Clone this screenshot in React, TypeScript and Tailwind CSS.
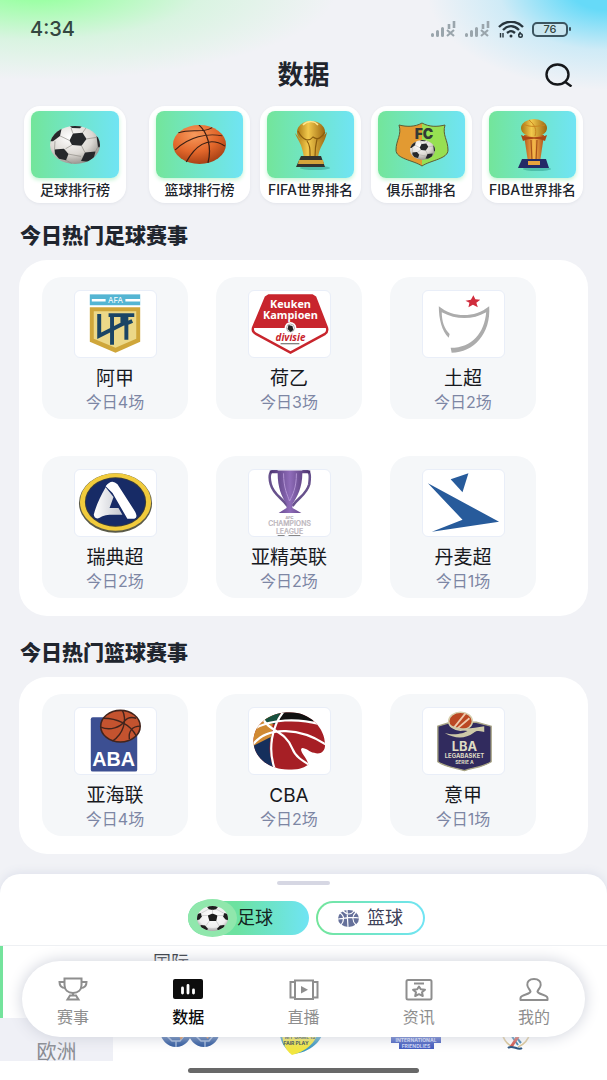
import React from 'react';

const SoccerBall = ({ className = '' }: { className?: string }) => (
  <svg viewBox="0 0 100 100" preserveAspectRatio="none" className={className} aria-hidden="true">
    <defs>
      <radialGradient id="soccerShade" cx="40%" cy="30%" r="75%">
        <stop offset="0%" stopColor="#ffffff" />
        <stop offset="60%" stopColor="#dcd8d3" />
        <stop offset="100%" stopColor="#8e8a85" />
      </radialGradient>
      <clipPath id="soccerClip">
        <circle cx="50" cy="50" r="50" />
      </clipPath>
    </defs>
    <circle cx="50" cy="50" r="50" fill="url(#soccerShade)" />
    <g clipPath="url(#soccerClip)">
      <g fill="#26282b">
        <path d="M46 20 L65 18 L73 34 L63 52 L44 50 L39 38Z" />
        <path d="M-2 40 L2 18 L14 4 L24 2 L20 26 L6 40Z" />
        <path d="M9 62 L28 60 L37 74 L32 90 L18 86 L10 74Z" />
        <path d="M70 70 L91 67 L88 82 L76 94 L62 92Z" />
        <path d="M93 26 L102 34 L102 56 L96 56Z" />
        <path d="M38 -2 L66 -2 L60 6 L44 5Z" />
      </g>
      <path
        d="M46 20 L42 5 M20 26 L39 38 M44 50 L31 60 M63 52 L70 70 M73 34 L93 30 M65 18 L72 5 M10 40 L9 62 M37 74 L62 80 M91 67 L96 54 M32 90 L44 99"
        stroke="#8c8984"
        strokeWidth="1.5"
        fill="none"
      />
    </g>
  </svg>
);

const FrontBall = ({ className = '' }: { className?: string }) => (
  <svg viewBox="0 0 100 100" preserveAspectRatio="none" className={className} aria-hidden="true">
    <defs>
      <radialGradient id="frontShade" cx="50%" cy="40%" r="60%">
        <stop offset="0%" stopColor="#ffffff" />
        <stop offset="75%" stopColor="#eeeeee" />
        <stop offset="100%" stopColor="#a8a8a8" />
      </radialGradient>
      <clipPath id="frontClip">
        <circle cx="50" cy="50" r="50" />
      </clipPath>
    </defs>
    <circle cx="50" cy="50" r="50" fill="url(#frontShade)" />
    <g clipPath="url(#frontClip)" fill="#1d1d1d">
      <path d="M35 38 L50 30 L66 38 L62 60 L40 60Z" />
      <path d="M32 3 L50 -4 L68 3 L62 13 L50 16 L38 13Z" />
      <path d="M-2 58 L0 32 L12 28 L16 42 L8 54Z" />
      <path d="M102 58 L100 32 L88 28 L84 42 L92 54Z" />
      <path d="M12 76 L26 78 L36 92 L26 102 L10 88Z" />
      <path d="M88 76 L74 78 L64 92 L74 102 L90 88Z" />
      <path
        d="M50 30V14 M35 38L14 38 M66 38L86 38 M40 60L28 80 M62 60L72 80 M38 12L12 30 M62 12L88 30 M36 92H64"
        stroke="#b9b9b9"
        strokeWidth="2"
        fill="none"
      />
    </g>
  </svg>
);

const Basketball = ({ className = '' }: { className?: string }) => (
  <svg viewBox="0 0 100 100" preserveAspectRatio="none" className={className} aria-hidden="true">
    <defs>
      <radialGradient id="basketShade" cx="40%" cy="25%" r="80%">
        <stop offset="0%" stopColor="#f79a5c" />
        <stop offset="55%" stopColor="#e2672b" />
        <stop offset="100%" stopColor="#a03c12" />
      </radialGradient>
    </defs>
    <circle cx="50" cy="50" r="50" fill="url(#basketShade)" />
    <path
      d="M49 0 C64 18 74 55 66 97 M4 64 C30 30 65 20 93 28 M10 20 C35 8 55 22 74 7 M25 95 C40 58 65 25 98 54"
      stroke="#3b1f14"
      strokeWidth="2.4"
      fill="none"
    />
  </svg>
);

const GoldDefs = () => (
  <defs>
    <linearGradient id="gold" x1="0" x2="1">
      <stop offset="0" stopColor="#a87512" />
      <stop offset="0.4" stopColor="#f2c94c" />
      <stop offset="1" stopColor="#9a6510" />
    </linearGradient>
    <linearGradient id="amber" x1="0" x2="1">
      <stop offset="0" stopColor="#b5561b" />
      <stop offset="0.5" stopColor="#f5b94a" />
      <stop offset="1" stopColor="#b0501a" />
    </linearGradient>
  </defs>
);

const WorldCup = () => (
  <svg viewBox="0 0 40 52" className="h-[52px] w-10" aria-hidden="true">
    <GoldDefs />
    <ellipse cx="24" cy="49" rx="15" ry="2" fill="#2c9a8a" opacity="0.5" />
    <path d="M4 14 C7 22 11 24 13 39 H27 C28 28 34 24 36 13 L30 20 H9Z" fill="url(#gold)" />
    <ellipse cx="20" cy="13" rx="14" ry="11" fill="url(#gold)" />
    <path d="M7 12 C12 22 18 23 22 18 C27 22 31 18 34 13 M16 22 C20 27 19 33 19 39 M26 20 C24 28 24 32 24 38" stroke="#8a5c0e" strokeWidth="1.2" fill="none" />
    <path d="M12 6 C17 1 24 2 27 6" stroke="#ffe58e" strokeWidth="1.5" fill="none" />
    <path d="M10 37 H30 L34 48 H5Z" fill="#33332f" />
    <path d="M8 41 H32 L33 45 H7Z" fill="#d3a43a" />
  </svg>
);

const FibaCup = () => (
  <svg viewBox="0 0 40 52" className="h-[52px] w-10" aria-hidden="true">
    <ellipse cx="24" cy="50" rx="14" ry="2" fill="#2c9a8a" opacity="0.5" />
    <path d="M11 16 H31 L27 43 H15Z" fill="url(#amber)" />
    <ellipse cx="21" cy="9" rx="13" ry="9" fill="url(#gold)" />
    <path d="M10 5 C18 9 26 7 32 6 M16 1 C22 6 24 11 22 17" stroke="#c98520" strokeWidth="1" fill="none" />
    <path d="M8 16 C14 19 28 19 34 16 L32 22 C26 19 16 19 10 22Z" fill="#a94716" />
    <path d="M18 21 L19 42 M24 21 L23 42" stroke="#a9521a" strokeWidth="1.2" />
    <path d="M9 40 H33 L36 49 H5Z" fill="#232a66" />
    <path d="M15 42 H27 V46 H15Z" fill="#e8a33c" />
  </svg>
);

const ClubBadge = () => (
  <div className="relative h-[45px] w-[54px]">
    <svg viewBox="0 0 54 45" className="h-full w-full" aria-hidden="true">
      <path
        d="M4 3 C12 5 20 5 27 1 C34 5 42 5 50 3 C47 13 53 18 53 28 C53 37 36 38 27 44 C18 38 1 37 1 28 C1 18 7 13 4 3Z"
        fill="#e29a32"
      />
      <path d="M27 1 C34 5 42 5 50 3 C47 13 53 18 53 28 C53 37 36 38 27 44Z" fill="#97e052" />
      <path
        d="M4 3 C12 5 20 5 27 1 C34 5 42 5 50 3 C47 13 53 18 53 28 C53 37 36 38 27 44 C18 38 1 37 1 28 C1 18 7 13 4 3Z"
        fill="none"
        stroke="#5b5d38"
        strokeWidth="1"
      />
      <text x="29" y="17" textAnchor="middle" fontSize="14" fontWeight="900" fill="#333a36" fontFamily="Inter, sans-serif">
        FC
      </text>
    </svg>
    <SoccerBall className="absolute top-[18px] left-[15px] h-5 w-[25px]" />
  </div>
);

const LogoLpf = () => (
  <>
    <rect x="15" y="3" width="51" height="11" fill="#54b5d3" />
    <path d="M17 9 H31 M51 9 H66" stroke="#fff" strokeWidth="2.4" />
    <text x="41" y="12" textAnchor="middle" fontSize="8" fill="#fff" fontFamily="Inter, sans-serif">AFA</text>
    <path d="M15 16 H66 V51 L41 62 L15 51Z" fill="#cfa63a" />
    <path d="M19 20 H62 V48 L41 57 L19 48Z" fill="#ecd888" />
    <path d="M24.500 23 V45 L48 33 V24 H34 M37.500 54 V24 M52 49 V24 H60 M51 33 L58 30" stroke="#1b4565" strokeWidth="4" fill="none" />
  </>
);

const LogoKeuken = () => (
  <>
    <path d="M20 4 H64 L67 6 L79 37 Q80 41 77 43 L42 62 L7 43 Q3 41 4 37 L17 6Z" fill="#fff" stroke="#c8252d" strokeWidth="2.4" />
    <path d="M20 4 H64 L67 6 L79 37 H4 L17 6Z" fill="#c8252d" />
    <g textAnchor="middle" fontFamily="Open Sans, sans-serif" fontWeight="700">
      <text x="42" y="17" fontSize="11" fill="#fff">Keuken</text>
      <text x="42" y="28" fontSize="11" fill="#fff">Kampioen</text>
      <text x="42" y="50" fontSize="10" fontStyle="italic" fill="#c8252d">divisie</text>
    </g>
    <circle cx="42" cy="37" r="6" fill="#fff" />
    <circle cx="42" cy="37" r="4" fill="#fff" stroke="#999" strokeWidth="0.8" />
    <path d="M40 34 L44 35 L45 39 L42 41 L39 38Z" fill="#222" />
    <path d="M32 53 H51" stroke="#555" strokeWidth="1" />
  </>
);

const LogoTurkey = () => (
  <>
    <path d="M51 4 L53 8 L58 8.500 L54 11.500 L55.500 16 L50.500 13.500 L46 16 L47 11.500 L43 9.500 L48.500 8.500Z" fill="#d02c3c" />
    <path
      d="M16 15 C31 27 52 27 67 15 C69 43 51 62 29 62 L28 57 C50 57 62 42 64 21 C50 29 34 29 19 21 C19 31 22 38 27 43 L26 47 C19 40 16 28 16 15Z"
      fill="#acacac"
    />
  </>
);

const LogoSweden = () => (
  <>
    <defs>
      <linearGradient id="swedenFold" x1="0" x2="1">
        <stop offset="0" stopColor="#fff" />
        <stop offset="1" stopColor="#c4c7cf" />
      </linearGradient>
    </defs>
    <ellipse cx="41" cy="33" rx="37" ry="30" fill="#5a5a48" />
    <ellipse cx="41" cy="32" rx="36" ry="29" fill="#f1cb3c" />
    <ellipse cx="41" cy="32" rx="31" ry="25" fill="#3b3d3c" />
    <ellipse cx="41" cy="32" rx="30" ry="24" fill="#172b66" />
    <path d="M31 17 C26 26 21 36 19 45 Q20 50 25 48 C30 44 39 45 48 45 L44 38 L35 38 L39 27Z" fill="url(#swedenFold)" />
    <path d="M31 16 Q37 8 43 14 L61 42 Q64 48 60 49 H53 L38 23Z" fill="#fff" />
  </>
);

const LogoAfc = () => (
  <>
    <defs>
      <linearGradient id="afcCup" x1="0" x2="1">
        <stop offset="0" stopColor="#4b3370" />
        <stop offset="0.5" stopColor="#8f6cb9" />
        <stop offset="1" stopColor="#49306b" />
      </linearGradient>
    </defs>
    <path d="M29 0 C20 -1 20 6 22 14 C25 25 33 27 39 36 M54 0 C63 -1 62 6 61 14 C58 25 50 27 44 36" stroke="#67518c" strokeWidth="2.600" fill="none" />
    <path d="M21 0 H62 V3 H54 C54 17 49 27 44 34 V38 L53 43 H30 L38 38 V34 C33 27 29 17 29 3 H21Z" fill="url(#afcCup)" />
    <path d="M35 3 C35 18 39 25 41 31 C44 25 48 18 48 3" stroke="#b294d3" strokeWidth="1" fill="none" />
    <g textAnchor="middle" fontFamily="Inter, sans-serif" fontWeight="500" fill="#cbc6cc" stroke="#9f979f" strokeWidth="0.200">
      <text x="41" y="49" fontSize="4">AFC</text>
      <text x="41" y="56" fontSize="7">CHAMPIONS</text>
      <text x="41" y="64" fontSize="7">LEAGUE</text>
    </g>
    <path d="M29 66 H36 M40 66 H52" stroke="#777" strokeWidth="1" />
  </>
);

const LogoDenmark = () => (
  <g fill="#275b9b">
    <path d="M28 9 L46 3 L40 22Z" />
    <path d="M5 13 L77 52 L9 62 L40 50Z" />
  </g>
);

const LogoAba = () => (
  <>
    <rect x="16" y="9" width="47" height="55" rx="2" fill="#3c4f92" />
    <text x="39" y="58" textAnchor="middle" fontSize="20" fontWeight="700" fill="#fff" fontFamily="Liberation Sans, sans-serif">
      ABA
    </text>
    <ellipse cx="46" cy="18" rx="20" ry="16" fill="#c4532f" stroke="#42241c" strokeWidth="1.600" />
    <path d="M48 2 C53 12 49 26 38 33 M26 19 C36 23 46 19 50 13 C54 8 59 9 62 10 M29 10 C42 10 56 16 62 28 M66 18 C58 18 54 23 55 31" stroke="#42241c" strokeWidth="1.400" fill="none" />
  </>
);

const LogoCba = () => (
  <>
    <defs>
      <clipPath id="cbaClip">
        <path d="M4.500 33 C4.500 17 20 4 41 4 C62 4 77 20 77 37 C77 44 72 47 66 45 C61 44 58 40 54 40 C49 42 60 51 60 57 C54 61 49 62 40 62 C20 62 4.500 49 4.500 33Z" />
      </clipPath>
    </defs>
    <g clipPath="url(#cbaClip)">
      <rect width="82" height="66" fill="#a61f25" />
      <path d="M0 0 H26 L22 32 L0 42Z" fill="#d08a33" />
      <path d="M0 40 L22 29 C19 43 22 56 28 66 H0Z" fill="#152f5c" />
      <path d="M16 0 H34 L27 16 L16 14Z" fill="#17503e" />
      <path d="M34 2 H70 L64 15 C52 10 40 12 28 14Z" fill="#111" />
      <path d="M36 2 C24 16 17 42 28 66 M3 22 C22 10 50 10 72 16 M3 38 C18 16 54 20 80 38 M14 10 C20 24 37 22 44 41 C47 49 54 53 64 59" stroke="#fff" strokeWidth="2.200" fill="none" />
    </g>
  </>
);

const LogoLba = () => (
  <>
    <path d="M15 18 L28 14 H54 L69 18 V54 C60 60 50 60 42 63 C33 60 24 60 15 54Z" fill="#312b5e" stroke="#a9a686" strokeWidth="1.400" />
    <ellipse cx="38" cy="13" rx="12" ry="9" fill="#bb4823" stroke="#d6cfae" strokeWidth="1.500" />
    <path d="M31 20 L43 5 M34 21 L47 10" stroke="#eec9ab" strokeWidth="1.800" />
    <path d="M22 25 C32 28 42 25 45 23 C35 21 29 21 28 17 C39 22 50 20 62 18 V24 C55 23 55 22 51 25 C43 31 32 31 22 25Z" fill="#cdc9a8" />
    <g textAnchor="middle" fontFamily="Inter, sans-serif" fontWeight="700" fill="#dfdcc4">
      <text x="42" y="43" fontSize="13">LBA</text>
      <text x="42" y="50" fontSize="6">LEGABASKET</text>
      <text x="42" y="56" fontSize="5">SERIE A</text>
    </g>
  </>
);

const shortcuts = [
  { label: '足球排行榜', art: <SoccerBall className="h-[38px] w-[50px]" /> },
  { label: '篮球排行榜', art: <Basketball className="h-[39px] w-[53px]" /> },
  { label: 'FIFA世界排名', art: <WorldCup /> },
  { label: '俱乐部排名', art: <ClubBadge /> },
  { label: 'FIBA世界排名', art: <FibaCup /> },
];

const footballLeagues = [
  { name: '阿甲', count: '今日4场', logo: <LogoLpf /> },
  { name: '荷乙', count: '今日3场', logo: <LogoKeuken /> },
  { name: '土超', count: '今日2场', logo: <LogoTurkey /> },
  { name: '瑞典超', count: '今日2场', logo: <LogoSweden /> },
  { name: '亚精英联', count: '今日2场', logo: <LogoAfc /> },
  { name: '丹麦超', count: '今日1场', logo: <LogoDenmark /> },
];

const basketballLeagues = [
  { name: '亚海联', count: '今日4场', logo: <LogoAba /> },
  { name: 'CBA', count: '今日2场', logo: <LogoCba /> },
  { name: '意甲', count: '今日1场', logo: <LogoLba /> },
];

const tabs = [
  {
    label: '赛事',
    icon: (
      <g fill="none" stroke="#8e8e8e" strokeWidth="2">
        <path d="M6.500 1.500 H23.500 V8 C23.500 13 20 16 15 16 C10 16 6.500 13 6.500 8Z" />
        <path d="M6.500 5 H1.500 C1.500 9 3 11 7.500 11 M23.500 5 H28.500 C28.500 9 27 11 22.500 11 M15 16 V19 M12 18.500 H18 L20.500 22.500 H9.500Z" />
      </g>
    ),
  },
  {
    label: '数据',
    active: true,
    icon: (
      <>
        <rect y="2" width="30" height="20" rx="2" fill="#0d0d0d" />
        <path d="M9.500 11 V16 M15 8.500 V16 M20.500 13 V16" stroke="#fff" strokeWidth="2.800" strokeLinecap="round" />
      </>
    ),
  },
  {
    label: '直播',
    icon: (
      <>
        <path d="M6 3.500 H24 V22 H6Z M6 5 H1.500 V20.500 H6 M24 5 H28.500 V20.500 H24" fill="none" stroke="#8e8e8e" strokeWidth="2" />
        <path d="M12 9 L19 12.800 L12 16.500Z" fill="#8e8e8e" />
      </>
    ),
  },
  {
    label: '资讯',
    icon: (
      <g fill="none" stroke="#8e8e8e" strokeWidth="2" strokeLinejoin="round">
        <rect x="2.500" y="3" width="25" height="19.500" rx="1.500" />
        <path d="M10 6.500 H20" />
        <path d="M15 9.500 L16.800 12.300 L21 12.800 L18 15.200 L18.800 19 L15 17.200 L11.200 19 L12 15.200 L9 12.800 L13.200 12.300Z" />
      </g>
    ),
  },
  {
    label: '我的',
    icon: (
      <path
        d="M15 2 C10.500 2 7.800 4.500 8.300 8 C8.600 11 11 12.500 11.500 14.500 C11 18 2 17 1.500 21 V23 H28.500 V21 C28 17 19 18 18.500 14.500 C19 12.500 21.400 11 21.700 8 C22.200 4.500 19.500 2 15 2Z"
        fill="none"
        stroke="#8e8e8e"
        strokeWidth="2"
        strokeLinejoin="round"
      />
    ),
  },
];

const Signal = () => (
  <svg viewBox="0 0 26 16" className="h-4 w-[26px]" fill="none" stroke="#9aa5ac" strokeWidth="3" aria-hidden="true">
    <path d="M2.500 13.500 V14.500 M7.500 10.500 V14.500 M12.500 7.500 V14.500" strokeLinecap="round" />
    <path d="M19 3 V8 M24 0 V7" strokeWidth="2.600" />
    <path d="M17 9 L24 15 M24 9 L17 15" strokeWidth="2.200" />
  </svg>
);

const StatusBar = () => (
  <div className="flex h-[58px] shrink-0 items-center justify-between pr-9 pl-[30px] text-[#34463f]">
    <span className="text-xl font-medium">4:34</span>
    <div className="flex items-center gap-2">
      <Signal />
      <Signal />
      <svg viewBox="0 0 26 17" className="h-[17px] w-[26px]" fill="none" stroke="#27353d" aria-hidden="true">
        <path d="M1 6 C8 -1 18 -1 25 6 M5 9 C10 4 16 4 21 9 M9 12 C12 9.500 14 9.500 17 12" strokeWidth="2.400" />
        <circle cx="13" cy="15" r="1.500" fill="#27353d" stroke="none" />
        <path d="M2.500 16.500 V12 M5 12 V16.500 M22.500 11 L20.500 14" strokeWidth="1.400" />
        <circle cx="22.500" cy="14.500" r="1.800" strokeWidth="1.400" />
      </svg>
      <span className="flex items-center">
        <span className="flex h-[15px] w-9 items-center justify-center rounded-[5px] border-2 border-[#3c5560] bg-[#c9e6f0] text-[11px] leading-none font-medium">
          76
        </span>
        <span className="ml-px h-1 w-0.5 rounded-full bg-[#3c5560]" />
      </span>
    </div>
  </div>
);

const ShortcutCard = ({ label, art }: { label: string; art: React.ReactNode }) => (
  <button className="flex h-[97px] flex-col rounded-2xl bg-white px-[7px] pt-[5px] shadow-[0_1px_3px_#e2e4ea]">
    <span className="flex h-[67px] w-full items-center justify-center rounded-lg bg-linear-to-r from-[#73e59a] to-[#70e4f4] shadow-[0_2px_4px_#c5f5d4]">
      {art}
    </span>
    <span className="w-full text-center text-[14px] leading-6 font-medium whitespace-nowrap text-[#20242c]">
      <span className="-mx-2 inline-block">{label}</span>
    </span>
  </button>
);

type League = { name: string; count: string; logo: React.ReactNode };

const LeaguePanel = ({ title, leagues }: { title: string; leagues: League[] }) => (
  <section>
    <h2 className="mb-3 pl-5 text-[21px] leading-6 font-black text-[#20252e]">{title}</h2>
    <div className="mx-[19px] grid grid-cols-3 gap-x-7 gap-y-[37px] rounded-[28px] bg-white pt-[17px] pr-[52px] pb-[18px] pl-[23px]">
      {leagues.map((league) => (
        <button key={league.name} className="flex h-[142px] flex-col items-center rounded-[20px] bg-[#f5f7f9] pt-[13px]">
          <span className="mb-[9px] block overflow-hidden rounded-md border border-[#e9eef8] bg-white">
            <svg viewBox="0 0 82 66" className="h-[66px] w-[81px]" aria-hidden="true">
              {league.logo}
            </svg>
          </span>
          <span className="text-[19px] leading-6 text-[#17191e]">{league.name}</span>
          <span className="text-base leading-[22px] text-[#7d86a4]">{league.count}</span>
        </button>
      ))}
    </div>
  </section>
);

const LeagueSheet = () => (
  <section className="mt-5 flex min-h-0 flex-1 flex-col overflow-hidden rounded-t-[20px] bg-white shadow-[0_-2px_10px_#dfe2ec]">
    <div className="mx-auto mt-[7px] h-1 w-[53px] shrink-0 rounded-full bg-[#d6d7e3]" />
    <div className="flex h-[60px] shrink-0 items-center justify-center gap-[7px] pt-1.5 pl-1.5">
      <button className="flex h-[34px] w-[121px] items-center rounded-full bg-linear-to-r from-[#6ce2a0] from-40% to-[#70e4f4] text-lg text-[#14251f]">
        <span className="flex h-[38px] w-[49px] shrink-0 items-center justify-center rounded-[50%] bg-[#90e7ac]">
          <FrontBall className="h-[25px] w-[31px]" />
        </span>
        足球
      </button>
      <button className="h-[34px] w-[109px] rounded-full bg-linear-to-r from-[#73e59a] to-[#70e4f4] p-0.5 text-lg text-[#3d4058]">
        <span className="flex h-full items-center justify-center gap-2 rounded-full bg-white">
          <svg viewBox="0 0 21 17" className="h-[17px] w-[21px]" aria-hidden="true">
            <ellipse cx="10.500" cy="8.500" rx="10.500" ry="8.500" fill="#65709a" />
            <path d="M9 0 L10 17 M0 9 C7 9 11 6 21 8 M2 3 C7 6 6 11 3 15 M18 2 C14 6 14 11 18 15 M5 1 C9 5 13 5 16 1" stroke="#fff" strokeWidth="1.200" fill="none" />
          </svg>
          篮球
        </span>
      </button>
    </div>
    <div className="flex min-h-0 flex-1 border-t border-[#eef0f3]">
      <div className="w-[113px] shrink-0">
        <button className="block h-[72px] w-full border-l-[3px] border-[#74e39c]" aria-label="国际" />
        <button className="block h-[68px] w-full bg-[#eff0f6] text-xl leading-5 text-[#888b92]">欧洲</button>
      </div>
      <div className="flex-1 pt-[7px]">
        <h3 className="pl-10 text-lg leading-5 text-[#20242c]">国际</h3>
        <div className="grid grid-cols-4 justify-items-center pt-8 pr-[22px] pl-5">
          <svg viewBox="0 0 60 52" className="h-[52px] w-[60px]" aria-hidden="true">
            <g fill="#29549b">
              <ellipse cx="16" cy="25" rx="16" ry="17" />
              <ellipse cx="44" cy="25" rx="16" ry="17" />
            </g>
            <path d="M7 31 L12 36 H20 L24 31 M16 36 V42 M36 31 L41 36 H49 L53 31 M45 36 V42" stroke="#91aad3" strokeWidth="1.500" fill="none" />
            <path d="M18 29 L24 31 L21 35Z M44 30 L50 28 L48 34Z" fill="#d07935" />
          </svg>
          <svg viewBox="0 0 50 52" className="h-[52px] w-[50px]" aria-hidden="true">
            <path d="M0 10 H48 C48 34 36 46 16 49 C4 44 0 32 0 10Z" fill="#3995bd" />
            <path d="M3 10 H42 C43 34 32 45 14 50 C6 44 3 36 3 10Z" fill="#f2e63c" />
            <g textAnchor="middle" fontSize="5" fontWeight="700" fill="#253d42" fontFamily="Inter, sans-serif">
              <text x="22" y="34">MY GAME IS</text>
              <text x="18" y="40">FAIR PLAY</text>
            </g>
          </svg>
          <svg viewBox="0 0 50 52" className="h-[52px] w-[50px]" aria-hidden="true">
            <path d="M0 32 H50 V38 H43 V44 H8 V38 H0Z" fill="#3c56bd" />
            <g textAnchor="middle" fontSize="5" fontWeight="700" fill="#cbd4f6" fontFamily="Inter, sans-serif">
              <text x="25" y="37">INTERNATIONAL</text>
              <text x="25" y="43">FRIENDLIES</text>
            </g>
          </svg>
          <svg viewBox="0 0 56 52" className="h-[52px] w-14" aria-hidden="true">
            <path d="M1 28 C3 36 7 40 12 42 M29 28 C27 36 22 40 17 42" stroke="#d9c28e" strokeWidth="1.500" fill="none" />
            <path d="M8 27 L17 40 M11 27 L20 38" stroke="#357ba9" strokeWidth="2" />
            <path d="M20 27 L10 42" stroke="#d34f43" strokeWidth="3" />
            <path d="M7 43 C11 39 17 46 21 43" stroke="#224d7b" strokeWidth="2" fill="none" />
          </svg>
        </div>
      </div>
    </div>
  </section>
);

const TabBar = () => (
  <nav className="absolute inset-x-[22px] bottom-[43px] flex h-[76px] justify-between rounded-full bg-white px-[21px] pt-4 shadow-[0_0_16px_#cdd0da]">
    {tabs.map((tab) => (
      <button
        key={tab.label}
        className={`flex w-[60px] flex-col items-center gap-1 text-base leading-6 ${
          tab.active ? 'font-medium text-[#0d0d0d]' : 'text-[#8e8e8e]'
        }`}
      >
        <svg viewBox="0 0 30 24" className="h-6 w-[30px]" aria-hidden="true">
          {tab.icon}
        </svg>
        {tab.label}
      </button>
    ))}
  </nav>
);

const App = () => {
  const [first, ...rest] = shortcuts;

  return (
    <div className="relative flex h-screen flex-col overflow-hidden bg-[#f1f2f6] bg-[radial-gradient(ellipse_300px_90px_at_6%_-10px,#9dffa6_12%,#c9f5d399_55%,transparent),radial-gradient(ellipse_180px_100px_at_100%_-10px,#66daf8_20%,#b8e6f799_60%,transparent)] font-['Inter','Noto_Sans_CJK_SC',sans-serif]">
      <StatusBar />
      <header className="relative flex h-[34px] shrink-0 items-center justify-center">
        <h1 className="text-[26px] leading-none font-bold text-[#20242c]">数据</h1>
        <button className="absolute right-[34px]" aria-label="搜索">
          <svg viewBox="0 0 28 24" className="h-6 w-7" fill="none" stroke="#15171a" strokeWidth="2.400" aria-hidden="true">
            <ellipse cx="12.500" cy="11.500" rx="11" ry="10" />
            <path d="M19.500 18.500 L26.500 23.500" />
          </svg>
        </button>
      </header>

      <div className="mt-3.5 mb-[21px] grid shrink-0 grid-cols-[102px_1fr] gap-[23px] px-6">
        <ShortcutCard {...first} />
        <div className="grid grid-cols-4 gap-2.5">
          {rest.map((item) => (
            <ShortcutCard key={item.label} {...item} />
          ))}
        </div>
      </div>

      <main className="flex shrink-0 flex-col gap-[25px]">
        <LeaguePanel title="今日热门足球赛事" leagues={footballLeagues} />
        <LeaguePanel title="今日热门篮球赛事" leagues={basketballLeagues} />
      </main>

      <LeagueSheet />
      <TabBar />

      <div className="h-[19px] shrink-0 bg-white pt-[7px]">
        <div className="mx-auto h-[5px] w-[231px] rounded-full bg-[#686868]" />
      </div>
    </div>
  );
};

export default App;
